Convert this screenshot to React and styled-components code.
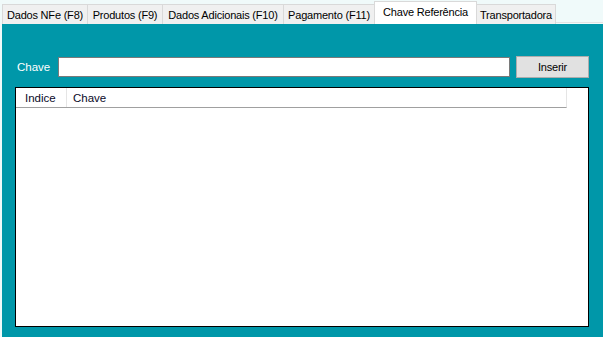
import React from "react";
import styled, { createGlobalStyle } from "styled-components";

const GlobalStyle = createGlobalStyle`
  html, body {
    margin: 0;
    padding: 0;
    background: #f0fafa;
    font-family: "Liberation Sans", Arial, sans-serif;
    font-size: 11px;
  }
`;

const tabs = [
  { label: "Dados NFe (F8)", width: 86 },
  { label: "Produtos (F9)", width: 76 },
  { label: "Dados Adicionais (F10)", width: 122 },
  { label: "Pagamento (F11)", width: 92 },
  { label: "Chave Referência", width: 103, active: true },
  { label: "Transportadora", width: 80 },
];

const Window = styled.div`
  width: 603px;
  height: 337px;
  display: flex;
  flex-direction: column;
  overflow: hidden;
`;

const TabStrip = styled.div`
  height: 25px;
  display: flex;
  align-items: flex-end;
  padding-left: 2px;
  box-sizing: border-box;
`;

const Tab = styled.div`
  width: ${(p) => p.width}px;
  height: ${(p) => (p.active ? 23 : 20)}px;
  box-sizing: border-box;
  display: flex;
  align-items: center;
  justify-content: center;
  padding-bottom: ${(p) => (p.active ? 3 : 0)}px;
  background: ${(p) => (p.active ? "#ffffff" : "#f0f0f0")};
  border: 1px solid #d9d9d9;
  border-bottom: none;
  margin-left: -1px;
  position: relative;
  z-index: ${(p) => (p.active ? 1 : 0)};
  color: #000;
  font-size: 11px;
  letter-spacing: -0.2px;
  white-space: nowrap;
  &:first-child {
    margin-left: 0;
  }
`;

const StripRest = styled.div`
  flex: 1;
  height: 2px;
  border-top: 1px solid #e3e3e3;
  box-sizing: border-box;
`;

const Panel = styled.div`
  flex: 1;
  margin-left: 2px;
  background: #0097a9;
  padding: 32px 14px 10px 13px;
  display: flex;
  flex-direction: column;
  gap: 9px;
`;

const Row = styled.div`
  display: flex;
  align-items: center;
  height: 22px;
`;

const Label = styled.span`
  color: #ffffff;
  font-size: 11.5px;
  width: 43px;
  box-sizing: border-box;
  padding-left: 2px;
`;

const Input = styled.div`
  width: 452px;
  height: 20px;
  box-sizing: border-box;
  background: #ffffff;
  border: 1px solid #7a7a7a;
`;

const Button = styled.div`
  width: 73px;
  height: 22px;
  margin-left: 6px;
  box-sizing: border-box;
  background: #e1e1e1;
  border: 1px solid #adadad;
  display: flex;
  align-items: center;
  justify-content: center;
  color: #000;
  font-size: 11px;
  letter-spacing: -0.2px;
`;

const ListBox = styled.div`
  width: 574px;
  height: 240px;
  box-sizing: border-box;
  background: #ffffff;
  border: 1px solid #000000;
`;

const Header = styled.div`
  width: 551px;
  height: 20px;
  box-sizing: border-box;
  display: flex;
  border-bottom: 1px solid #a0a0a0;
  border-right: 1px solid #e5e5e5;
`;

const HeaderCell = styled.div`
  width: ${(p) => p.width || "auto"};
  flex: ${(p) => (p.width ? "none" : 1)};
  box-sizing: border-box;
  display: flex;
  align-items: center;
  padding-left: ${(p) => p.pad}px;
  border-right: ${(p) => (p.width ? "1px solid #e5e5e5" : "none")};
  color: #0a0a28;
  font-size: 11.5px;
`;

export default function App() {
  return (
    <>
      <GlobalStyle />
      <Window>
        <TabStrip>
          {tabs.map((t) => (
            <Tab key={t.label} width={t.width} active={t.active}>
              {t.label}
            </Tab>
          ))}
          <StripRest />
        </TabStrip>
        <Panel>
          <Row>
            <Label>Chave</Label>
            <Input />
            <Button>Inserir</Button>
          </Row>
          <ListBox>
            <Header>
              <HeaderCell width="51px" pad={9}>
                Indice
              </HeaderCell>
              <HeaderCell pad={6}>Chave</HeaderCell>
            </Header>
          </ListBox>
        </Panel>
      </Window>
    </>
  );
}
